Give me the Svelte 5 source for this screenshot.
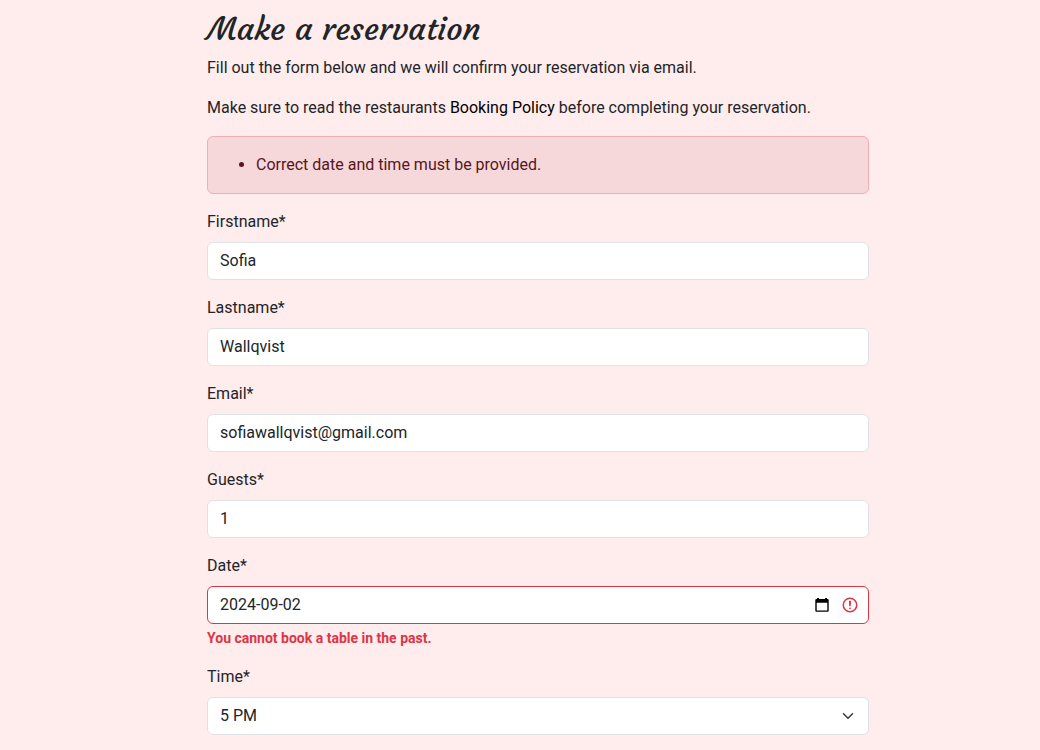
<script>
  let firstname = $state('Sofia');
  let lastname = $state('Wallqvist');
  let email = $state('sofiawallqvist@gmail.com');
  let guests = $state('1');
  let date = $state('2024-09-02');
  let time = $state('5 PM');
  const times = ['5 PM', '6 PM', '7 PM', '8 PM', '9 PM'];
</script>

<div class="page">
  <main>
    <h1>Make a reservation</h1>
    <p>Fill out the form below and we will confirm your reservation via email.</p>
    <p>
      Make sure to read the restaurants <a href="#policy">Booking Policy</a> before completing your reservation.
    </p>

    <div class="alert" role="alert">
      <ul>
        <li>Correct date and time must be provided.</li>
      </ul>
    </div>

    <form novalidate>
      <div class="field">
        <label for="firstname">Firstname*</label>
        <input class="control" id="firstname" type="text" bind:value={firstname} />
      </div>
      <div class="field">
        <label for="lastname">Lastname*</label>
        <input class="control" id="lastname" type="text" bind:value={lastname} />
      </div>
      <div class="field">
        <label for="email">Email*</label>
        <input class="control" id="email" type="email" bind:value={email} />
      </div>
      <div class="field">
        <label for="guests">Guests*</label>
        <input class="control" id="guests" type="text" inputmode="numeric" bind:value={guests} />
      </div>
      <div class="field">
        <label for="date">Date*</label>
        <div class="control group invalid">
          <input
            id="date"
            type="text"
            aria-invalid="true"
            aria-describedby="date-error"
            bind:value={date}
          />
          <button type="button" aria-label="Open calendar">
            <svg width="14" height="16" viewBox="0 0 14 16" aria-hidden="true">
              <path
                fill="#000"
                fill-rule="evenodd"
                d="M2 1h2v1h6V1h2v1h.6A1.2 1.2 0 0 1 13.700 3.200v10.400a1.200 1.200 0 0 1-1.200 1.200H1.500A1.200 1.200 0 0 1 .3 13.600V3.200A1.200 1.200 0 0 1 1.500 2H2zM1.700 5.700v7.800h10.600V5.700z"
              />
            </svg>
          </button>
          <svg class="warn" width="18" height="18" viewBox="0 0 12 12" fill="none" stroke="#dc3545" aria-hidden="true">
            <circle cx="6" cy="6" r="4.5" />
            <path stroke-linejoin="round" d="M5.8 3.6h.4L6 6.5z" />
            <circle cx="6" cy="8.2" r=".6" fill="#dc3545" stroke="none" />
          </svg>
        </div>
        <strong class="feedback" id="date-error">You cannot book a table in the past.</strong>
      </div>
      <div class="field">
        <label for="time">Time*</label>
        <div class="select">
          <select class="control" id="time" bind:value={time}>
            {#each times as t}
              <option>{t}</option>
            {/each}
          </select>
          <svg width="16" height="12" viewBox="0 0 16 16" aria-hidden="true">
            <path
              fill="none"
              stroke="#343a40"
              stroke-linecap="round"
              stroke-linejoin="round"
              stroke-width="2"
              d="m2 5 6 6 6-6"
            />
          </svg>
        </div>
      </div>
    </form>
  </main>
</div>

<style>
  :global(body) {
    margin: 0;
    background: #ffecec;
  }
  .page {
    display: grid;
    grid-template-columns: minmax(16px, 207fr) minmax(0, 662fr) minmax(16px, 171fr);
    padding: 10px 0 8px;
    color: #212529;
    font: 400 16px/24px Roboto, sans-serif;
  }
  .page * {
    box-sizing: border-box;
  }
  main {
    grid-column: 2;
  }
  h1 {
    margin: 0 0 8px;
    font: 500 32px/38px Courgette, Lato, sans-serif;
  }
  p {
    margin: 0 0 16px;
  }
  a {
    color: #000;
    text-decoration: none;
  }
  .alert {
    margin-bottom: 16px;
    padding: 16px;
    border: 1px solid #f1aeb5;
    border-radius: 6px;
    background: #f6d7da;
    color: #58151c;
  }
  ul {
    margin: 0;
    padding-left: 32px;
  }
  form {
    display: flex;
    flex-direction: column;
    gap: 16px;
  }
  .field {
    display: flex;
    flex-direction: column;
  }
  label {
    align-self: flex-start;
    margin-bottom: 8px;
  }
  .control {
    width: 100%;
    margin: 0;
    padding: 6px 12px;
    border: 1px solid #dee2e6;
    border-radius: 6px;
    background: #fff;
    color: #212529;
    font: inherit;
    appearance: none;
  }
  input.control,
  select.control {
    height: 38px;
  }
  input.control {
    padding: 5px 12px 7px;
  }
  .group {
    display: flex;
    align-items: center;
    padding: 6px 9px 6px 12px;
  }
  .invalid {
    border-color: #dc3545;
  }
  .group input {
    flex: 1;
    min-width: 0;
    height: 24px;
    padding: 0;
    border: 0;
    outline: 0;
    background: none;
    color: inherit;
    font: inherit;
  }
  .group button {
    display: flex;
    margin: 0 12px 0 8px;
    padding: 0;
    border: 0;
    background: none;
  }
  .feedback {
    margin-top: 4px;
    color: #dc3545;
    font-size: 14px;
    font-weight: 700;
    line-height: 21px;
  }
  .select {
    display: grid;
    align-items: center;
  }
  .select > :global(*) {
    grid-area: 1 / 1;
  }
  .select svg {
    justify-self: end;
    margin-right: 13px;
    pointer-events: none;
  }
</style>
